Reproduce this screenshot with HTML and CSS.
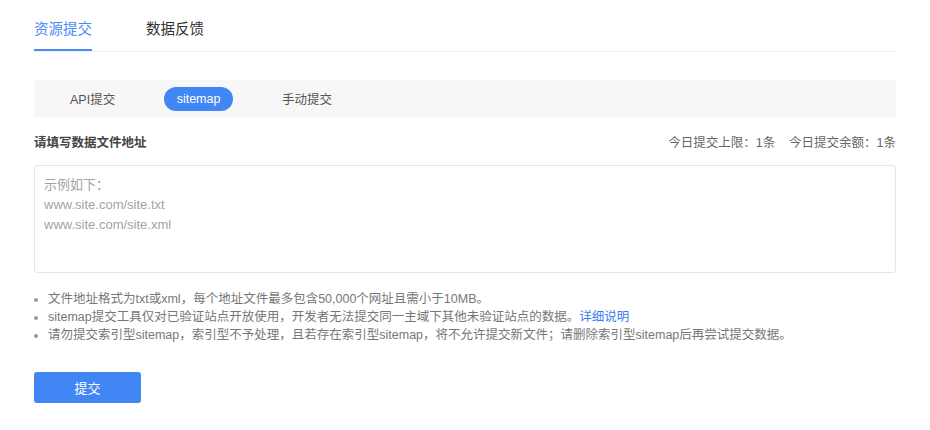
FILE: index.html
```html
<!DOCTYPE html>
<html lang="zh-CN">
<head>
  <meta charset="UTF-8">
  <title>资源提交</title>
  <link rel="stylesheet" href="styles.css">
</head>
<body>
  <div class="page">
    <div class="tabs">
      <a class="tab active" href="#">资源提交</a>
      <a class="tab" href="#">数据反馈</a>
    </div>

    <div class="subnav">
      <span class="sub-item">API提交</span>
      <span class="sub-item current">sitemap</span>
      <span class="sub-item">手动提交</span>
    </div>

    <div class="form-head">
      <span class="label">请填写数据文件地址</span>
      <span class="quota">今日提交上限：1条&nbsp;&nbsp;&nbsp;&nbsp;今日提交余额：1条</span>
    </div>

    <textarea class="urls" placeholder="示例如下：&#10;www.site.com/site.txt&#10;www.site.com/site.xml"></textarea>

    <ul class="tips">
      <li>文件地址格式为txt或xml，每个地址文件最多包含50,000个网址且需小于10MB。</li>
      <li>sitemap提交工具仅对已验证站点开放使用，开发者无法提交同一主域下其他未验证站点的数据。<a href="#">详细说明</a></li>
      <li>请勿提交索引型sitemap，索引型不予处理，且若存在索引型sitemap，将不允许提交新文件；请删除索引型sitemap后再尝试提交数据。</li>
    </ul>

    <button class="submit">提交</button>
  </div>
</body>
</html>
```

FILE: styles.css
```css
body {
  margin: 0;
  font-family: "Liberation Sans", "Noto Sans CJK SC", sans-serif;
  background: #fff;
  color: #333;
}

.page {
  width: 862px;
  padding-left: 34px;
}

.tabs {
  display: flex;
  gap: 54px;
  border-bottom: 1px solid #f2f2f2;
}

.tab {
  padding: 18px 0 9px;
  font-size: 14.5px;
  line-height: 22px;
  color: #333;
  text-decoration: none;
  border-bottom: 2px solid transparent;
}

.tab.active {
  color: #4a8af4;
  border-bottom-color: #4a8af4;
}

.subnav {
  margin-top: 28px;
  height: 37px;
  background: #f7f7f7;
  display: flex;
  align-items: center;
  gap: 49px;
  padding-left: 36px;
}

.sub-item {
  font-size: 12.5px;
  color: #555;
}

.sub-item.current {
  background: #4286f5;
  color: #fff;
  padding: 0 12.5px;
  height: 24px;
  line-height: 24px;
  border-radius: 12px;
  font-size: 12.5px;
}

.form-head {
  margin-top: 16px;
  display: flex;
  justify-content: space-between;
  line-height: 20px;
  font-size: 12.5px;
}

.label {
  font-weight: bold;
  color: #444;
}

.quota {
  color: #666;
}

.urls {
  display: block;
  box-sizing: border-box;
  width: 100%;
  height: 108px;
  margin-top: 12px;
  padding: 9px 9px;
  border: 1px solid #e6e6e6;
  border-radius: 3px;
  font-family: inherit;
  font-size: 13px;
  line-height: 20px;
  resize: none;
  outline: none;
}

.urls::placeholder {
  color: #a3a3a3;
}

.tips {
  margin: 17px 0 0;
  padding-left: 14px;
  font-size: 12.5px;
  line-height: 18px;
  color: #777;
}

.tips li::marker {
  color: #999;
}

.tips a {
  color: #3a7cf0;
  text-decoration: none;
}

.submit {
  margin-top: 28px;
  width: 107px;
  height: 31px;
  background: #4286f5;
  border: none;
  border-radius: 3px;
  color: #fff;
  font-size: 13px;
  font-family: inherit;
  cursor: pointer;
}
```
